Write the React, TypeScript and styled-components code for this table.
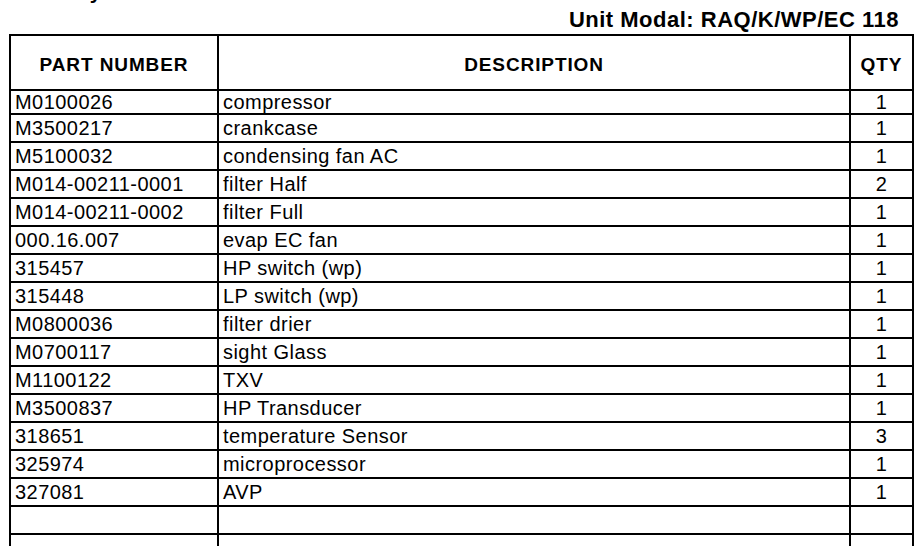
import styled, { createGlobalStyle } from 'styled-components'

const GlobalStyle = createGlobalStyle`
  html, body {
    margin: 0;
    padding: 0;
    background: #ffffff;
    overflow: hidden;
  }
  body {
    font-family: "Liberation Sans", Arial, sans-serif;
    color: #000000;
  }
`

const Page = styled.div`
  width: 914px;
  height: 546px;
  padding-left: 9px;
  box-sizing: border-box;
  overflow: hidden;
`

// heading of the previous block, only its descender is left in view
const CutHeading = styled.div`
  margin-top: -20px;
  padding-left: 52px;
  height: 24px;
  line-height: 24px;
  font-size: 21px;
  font-weight: 700;
  letter-spacing: 1px;
`

const ModelLine = styled.div`
  margin-top: 4px;
  height: 24px;
  line-height: 24px;
  padding-right: 15px;
  text-align: right;
  font-size: 22px;
  font-weight: 700;
  letter-spacing: 0.5px;
`

const Table = styled.div`
  margin-top: 2px;
  width: 905px;
  box-sizing: border-box;
  border-left: 2px solid #000;
  border-top: 2px solid #000;
  display: flex;
  flex-direction: column;
`

const Row = styled.div<{ $height: number }>`
  display: grid;
  grid-template-columns: 208px 632px 63px;
  height: ${({ $height }) => $height}px;
  box-sizing: border-box;
  border-bottom: 2px solid #000;
`

const Cell = styled.div<{ $align?: 'left' | 'center' }>`
  display: flex;
  align-items: center;
  justify-content: ${({ $align }) => ($align === 'center' ? 'center' : 'flex-start')};
  padding: 0 ${({ $align }) => ($align === 'center' ? '0' : '4px')};
  border-right: 2px solid #000;
  box-sizing: border-box;
  font-size: 20px;
  letter-spacing: 0.45px;
  white-space: nowrap;
  overflow: hidden;
`

const HeadCell = styled(Cell)`
  font-size: 19px;
  font-weight: 700;
  letter-spacing: 0.9px;
  padding-top: 4px;
`

type Part = { no: string; desc: string; qty: string }

const parts: Part[] = [
  { no: 'M0100026', desc: 'compressor', qty: '1' },
  { no: 'M3500217', desc: 'crankcase', qty: '1' },
  { no: 'M5100032', desc: 'condensing fan AC', qty: '1' },
  { no: 'M014-00211-0001', desc: 'filter Half', qty: '2' },
  { no: 'M014-00211-0002', desc: 'filter Full', qty: '1' },
  { no: '000.16.007', desc: 'evap EC fan', qty: '1' },
  { no: '315457', desc: 'HP switch (wp)', qty: '1' },
  { no: '315448', desc: 'LP switch (wp)', qty: '1' },
  { no: 'M0800036', desc: 'filter drier', qty: '1' },
  { no: 'M0700117', desc: 'sight Glass', qty: '1' },
  { no: 'M1100122', desc: 'TXV', qty: '1' },
  { no: 'M3500837', desc: 'HP Transducer', qty: '1' },
  { no: '318651', desc: 'temperature Sensor', qty: '3' },
  { no: '325974', desc: 'microprocessor', qty: '1' },
  { no: '327081', desc: 'AVP', qty: '1' },
  { no: '', desc: '', qty: '' },
  { no: '', desc: '', qty: '' },
]

export default function App() {
  return (
    <Page>
      <GlobalStyle />
      <CutHeading>Key</CutHeading>
      <ModelLine>Unit Modal: RAQ/K/WP/EC 118</ModelLine>
      <Table>
        <Row $height={55}>
          <HeadCell $align="center">PART NUMBER</HeadCell>
          <HeadCell $align="center">DESCRIPTION</HeadCell>
          <HeadCell $align="center">QTY</HeadCell>
        </Row>
        {parts.map((p, i) => (
          <Row key={i} $height={i === 0 ? 24 : 28}>
            <Cell>{p.no}</Cell>
            <Cell>{p.desc}</Cell>
            <Cell $align="center">{p.qty}</Cell>
          </Row>
        ))}
      </Table>
    </Page>
  )
}
